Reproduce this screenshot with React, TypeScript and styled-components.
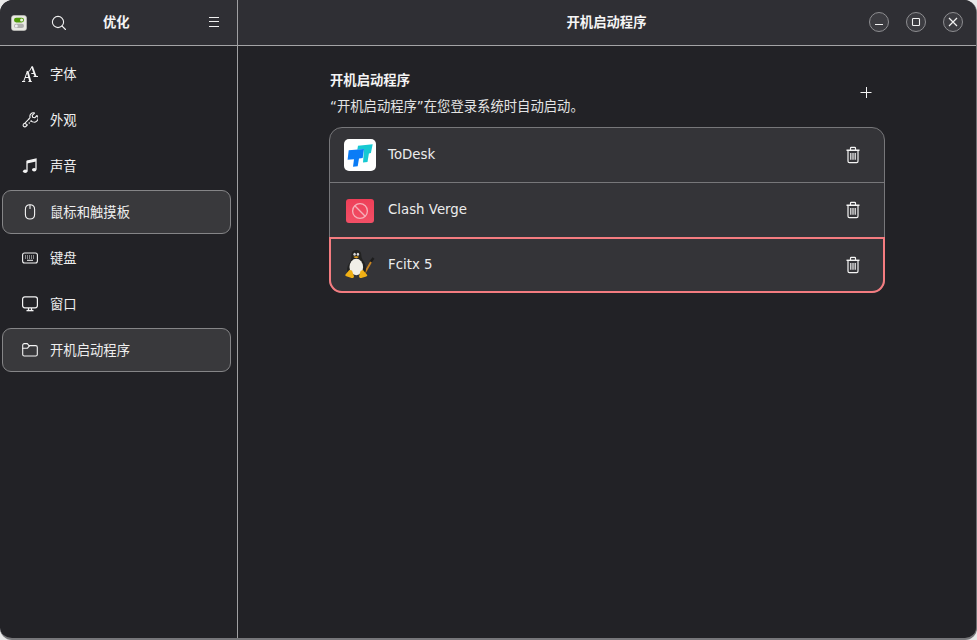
import React from 'react';
import styled, { createGlobalStyle } from 'styled-components';

const Global = createGlobalStyle`
  html, body { margin: 0; padding: 0; background: #e9e9e9; width: 977px; height: 640px; overflow: hidden; }
  #root { width: 977px; height: 640px; }
  * { box-sizing: border-box; }
`;

const Win = styled.div`
  width: 977px; height: 640px;
  display: grid;
  grid-template-columns: 238px 1fr;
  background: #222226;
  border-radius: 13px 13px 12px 12px;
  border-right: 1px solid #6f6f72;
  border-bottom: 2px solid #77777a;
  overflow: hidden;
  color: #f2f2f2;
  font-family: "DejaVu Sans", "Noto Sans CJK SC", sans-serif;
  font-size: 13.33px;
`;
const Side = styled.aside`
  display: flex; flex-direction: column;
  border-right: 1px solid #a0a0a2;
  min-height: 0;
`;
const Main = styled.main`
  display: flex; flex-direction: column; min-width: 0;
`;
const Header = styled.header`
  height: 46px; flex: none;
  background: #2f2f34;
  border-bottom: 1px solid #a4a4a6;
  display: flex; align-items: center;
  position: relative;
`;
const AppIconWrap = styled.span`
  display: flex; margin-left: 11px;
`;
const HeadIcon = styled.span<{ $ml: number }>`
  display: flex; margin-left: ${p => p.$ml}px; color: #f0f0f0;
`;
const SideTitle = styled.h1`
  margin: 0 0 0 36px; width: 27px; font-size: 13.33px; font-weight: 700; color: #f5f5f5; line-height: 1; white-space: nowrap;
`;
const MainTitle = styled.h1`
  margin: 0; flex: 1; text-align: center; font-size: 13.33px; font-weight: 700; line-height: 1; color: #f5f5f5;
  padding-right: 1px;
`;
const WinBtns = styled.div`
  position: absolute; right: 13px; top: 12px; display: flex; gap: 17px;
`;
const WinBtn = styled.span`
  width: 20px; height: 20px; border-radius: 50%;
  background: #3c3c41; border: 1px solid #8e8e91;
  display: flex; align-items: center; justify-content: center; color: #f2f2f2;
`;
const Nav = styled.nav`
  display: flex; flex-direction: column; gap: 2px;
  padding: 6px 6px 0 2px;
`;
const NavRow = styled.div<{ $on?: boolean }>`
  height: 44px; display: flex; align-items: center;
  border-radius: 9px;
  border: 1px solid ${p => (p.$on ? '#858587' : 'transparent')};
  background: ${p => (p.$on ? '#39393c' : 'transparent')};
  padding-left: 17px; gap: 10px;
  color: #efefef; line-height: 1;
`;
const NavLabel = styled.span`
  padding-top: 2px;
`;
const NavIcon = styled.span`
  width: 20px; height: 20px; display: flex; align-items: center; justify-content: center; flex: none; color: #f4f4f4;
`;
const Content = styled.div`
  flex: 1; padding: 26px 0 0 91px; width: 647px;
`;
const SecHead = styled.div`
  display: flex; align-items: flex-start; justify-content: space-between;
  height: 55px; width: 556px; padding: 0 11px 0 1px;
`;
const SecText = styled.div`
  display: flex; flex-direction: column; gap: 9px;
`;
const SecTitle = styled.h2`
  margin: 0; font-size: 13.33px; font-weight: 700; line-height: 17px; color: #f4f4f4;
`;
const SecSub = styled.p`
  margin: 0; font-size: 13.33px; font-weight: 400; line-height: 17px; color: #e4e4e4;
`;
const AddBtn = styled.span`
  display: flex; width: 16px; height: 16px; color: #f4f4f4; margin-top: 12px;
`;
const List = styled.div`
  width: 556px;
  border-radius: 13px;
  background: #343438;
  display: flex; flex-direction: column;
  position: relative;
  border: 1px solid #77777a;
`;
const Row = styled.div<{ $last?: boolean }>`
  height: ${p => (p.$last ? 54 : 55)}px; display: flex; align-items: center; padding: 0 23px 0 14px;
  border-bottom: ${p => (p.$last ? 'none' : '1px solid #77777a')};
  position: relative;
`;
const Focus = styled.div`
  position: absolute; left: -1px; right: -1px; bottom: -1px; height: 56px;
  border: 2px solid #f47c80; border-radius: 0 0 13px 13px; pointer-events: none;
`;
const AppIcon = styled.span`
  width: 32px; height: 32px; display: flex; flex: none; align-items: center; justify-content: center;
`;
const RowLabel = styled.span`
  margin-left: 12px; flex: 1; color: #ececec; line-height: 1; padding-bottom: 1px;
`;
const Trash = styled.span`
  display: flex; width: 16px; height: 18px; color: #f4f4f4;
`;

const Ico: React.FC<{ s?: number; children: React.ReactNode }> = ({ s = 16, children }) => (
  <svg width={s} height={s} viewBox="0 0 16 16" fill="none" stroke="currentColor" strokeWidth="1.1" strokeLinecap="round" strokeLinejoin="round">
    {children}
  </svg>
);

const TweaksIcon = () => (
  <svg width="16" height="16" viewBox="0 0 16 16">
    <rect x="0.5" y="0.5" width="15" height="15" rx="2.5" fill="#e9e9e3" stroke="#c9c9c4" strokeWidth="0.6" />
    <rect x="3" y="2.8" width="10" height="4.6" rx="2.3" fill="#4f9a08" />
    <circle cx="10.6" cy="5.1" r="1.5" fill="#e8f2dc" />
    <rect x="3" y="8.8" width="10" height="4.2" rx="2.1" fill="#b0b0ae" />
    <circle cx="5.3" cy="10.9" r="1.5" fill="#efefef" />
  </svg>
);

const FontIcon = () => (
  <svg width="16" height="16" viewBox="0 0 16 16" fill="none" stroke="currentColor" strokeLinejoin="round">
    <path d="M0 15.500h3.200M6.400 15.500h3.400" strokeWidth="1" />
    <path d="M1.600 15.500 5.500 5" strokeWidth="1" />
    <path d="M5.500 5 8.300 15.500" strokeWidth="1.900" />
    <path d="M3 11.500h4.500" strokeWidth="1" />
    <path d="M7.200 5.500 10 .5" strokeWidth="1" />
    <path d="M10 .5 13.700 10.800" strokeWidth="1.900" />
    <path d="M9.300 7.500h3" strokeWidth="1" />
    <path d="M11.500 10.500h4.500" strokeWidth="1" />
  </svg>
);

const WrenchIcon = () => (
  <Ico>
    <path d="M15 3.500 12.700 5.800l-2-.5-.5-2 2.300-2.300a3.500 3.500 0 0 0-4.400 4.500L7 6.800M9.200 8.800a3.500 3.500 0 0 0 5.800-5.300" />
    <path d="M6.800 7.200 2.700 11.300" />
    <path d="M5.200 13h.1M7.200 11h.1M9 9.200h.1" strokeWidth="1.400" />
    <circle cx="2.800" cy="13.200" r="1.700" />
  </Ico>
);

const NoteIcon = () => (
  <svg width="16" height="16" viewBox="0 0 16 16">
    <path d="M5 3.200 14 1v10.400" fill="none" stroke="currentColor" strokeWidth="1.300" />
    <path d="M5 2.800v10.200" stroke="currentColor" strokeWidth="1.300" />
    <path d="M5 3.200 14 1v2.400L5 5.600z" fill="currentColor" />
    <ellipse cx="3.200" cy="13.200" rx="2.200" ry="1.800" fill="currentColor" />
    <ellipse cx="12.200" cy="11.800" rx="2.200" ry="1.800" fill="currentColor" />
  </svg>
);

const MouseIcon = () => (
  <Ico>
    <path d="M8 .8C5.100.8 3.400 2.400 3.400 5.200v5.200c0 2.800 1.700 4.600 4.600 4.600s4.600-1.800 4.600-4.600V5.200C12.600 2.400 10.900.8 8 .8z" />
    <path d="M8 1.100v3.400" />
  </Ico>
);

const KeyboardIcon = () => (
  <svg width="16" height="16" viewBox="0 0 16 16" fill="none" stroke="currentColor" strokeWidth="1.100">
    <rect x="0.600" y="3" width="14.800" height="10" rx="2" />
    <path d="M3 6h10M3 8h10" strokeDasharray="1 1" strokeWidth="1" />
    <path d="M5 10.300h6" strokeWidth="1" />
  </svg>
);

const MonitorIcon = () => (
  <svg width="16" height="16" viewBox="0 0 16 16" fill="none" stroke="currentColor" strokeWidth="1.200">
    <rect x="0.600" y="0.800" width="14.800" height="11" rx="2.200" />
    <path d="M6.500 12v2M9.500 12v2" />
    <path d="M4.500 14.600h7" strokeWidth="1.400" />
  </svg>
);

const FolderIcon = () => (
  <Ico>
    <path d="M.7 3.200a1.600 1.600 0 0 1 1.600-1.600h3l1.700 2h6.700a1.600 1.600 0 0 1 1.600 1.600v7.200a1.600 1.600 0 0 1-1.600 1.600H2.300a1.600 1.600 0 0 1-1.600-1.600z" />
    <path d="M.7 6.200h4.800l2.200-2.600" />
  </Ico>
);

const TrashIcon = () => (
  <svg width="16" height="18" viewBox="0 0 16 18" fill="none" stroke="currentColor" strokeWidth="1.200">
    <path d="M1.500 4.300h13" strokeWidth="1.400" />
    <path d="M5.500 4V2.200c0-.5.400-.8.800-.8h3.400c.4 0 .8.300.8.800V4" />
    <path d="M3 4.500v10.700c0 .9.600 1.400 1.400 1.400h7.200c.8 0 1.400-.5 1.400-1.400V4.500" />
    <path d="M5.800 7v6.800M8 7v6.800M10.200 7v6.800" />
  </svg>
);

const ToDeskIcon = () => (
  <svg width="32" height="32" viewBox="0 0 32 32">
    <rect width="32" height="32" rx="5" fill="#ffffff" />
    <path d="M14 6.700 28.700 5.300 26.900 14 24.900 14.400 23.500 23 19 23.500 20 10 13.300 10.700z" fill="#17c9d2" />
    <path d="M4.700 11.300 20 10 18.700 19 15 19.400 13.700 27.300 9 27.800 10 20.300 3.600 20.800z" fill="#0a7cf6" />
  </svg>
);

const ClashIcon = () => (
  <svg width="28" height="26" viewBox="0 0 28 26">
    <defs>
      <linearGradient id="clashFill" x1="0" y1="0" x2="0" y2="1">
        <stop offset="0" stopColor="#ee3f58" />
        <stop offset="1" stopColor="#f24f66" />
      </linearGradient>
    </defs>
    <rect x="0" y="2" width="28" height="24" rx="3" fill="url(#clashFill)" />
    <circle cx="14" cy="14" r="7.400" fill="none" stroke="#f6b0ba" strokeWidth="1.300" />
    <path d="M8.800 8.800 19.200 19.200" stroke="#f6b0ba" strokeWidth="1.300" />
  </svg>
);

const TuxIcon = () => (
  <svg width="32" height="32" viewBox="0 0 32 32">
    <path d="M26.500 13 29.500 9" stroke="#1d1d1d" strokeWidth="2.400" fill="none" />
    <path d="M19 27 27 13" stroke="#c98420" strokeWidth="1.800" fill="none" />
    <path d="M12.300 1c3.300 0 5 2.200 5 5.200 0 3 1.800 5 3.200 7.500 1.600 3 1.900 7.200.7 10.300H3.700c-1.400-3.200-.4-7 1.800-10 1.600-2.300 1.900-4.500 1.900-7.300C7.400 3.200 9 1 12.300 1z" fill="#222" />
    <ellipse cx="12.300" cy="18" rx="6.800" ry="8.300" fill="#f1efe8" />
    <ellipse cx="10.600" cy="5.200" rx="1.200" ry="1.500" fill="#d8d8d8" />
    <ellipse cx="13.900" cy="5.200" rx="1.200" ry="1.500" fill="#d8d8d8" />
    <path d="M9.400 7.800c1.500-.9 4.100-.9 5.500 0-1 1.700-4.500 1.700-5.500 0z" fill="#e0a01c" />
    <path d="M5.300 21 1.500 25.600c-.5.800-.1 1.400.9 1.700l5.200 1.600c1.500.3 2.700-.6 2.300-2L8 21.500z" fill="#f0b015" />
    <path d="M19 21 23 25.800c.5.700.2 1.300-.7 1.600l-5 1.600c-1.400.2-2.500-.7-2.200-2l1.500-5.200z" fill="#f0b015" />
  </svg>
);

const nav = [
  { label: '字体', icon: <FontIcon /> },
  { label: '外观', icon: <WrenchIcon /> },
  { label: '声音', icon: <NoteIcon /> },
  { label: '鼠标和触摸板', icon: <MouseIcon />, on: true },
  { label: '键盘', icon: <KeyboardIcon /> },
  { label: '窗口', icon: <MonitorIcon /> },
  { label: '开机启动程序', icon: <FolderIcon />, on: true },
];

const apps = [
  { label: 'ToDesk', icon: <ToDeskIcon /> },
  { label: 'Clash Verge', icon: <ClashIcon /> },
  { label: 'Fcitx 5', icon: <TuxIcon />, last: true },
];

export default function App() {
  return (
    <>
      <Global />
      <Win>
        <Side>
          <Header>
            <AppIconWrap><TweaksIcon /></AppIconWrap>
            <HeadIcon $ml={24}>
              <Ico><circle cx="7" cy="7" r="5.600" /><path d="M11 11l3.500 3.500" /></Ico>
            </HeadIcon>
            <SideTitle>优化</SideTitle>
            <HeadIcon $ml={76}>
              <svg width="16" height="16" viewBox="0 0 16 16" stroke="currentColor" strokeWidth="1"><path d="M3 2.500h10M3 6.500h10M3 11.500h10" /></svg>
            </HeadIcon>
          </Header>
          <Nav>
            {nav.map(n => (
              <NavRow key={n.label} $on={n.on}>
                <NavIcon>{n.icon}</NavIcon>
                <NavLabel>{n.label}</NavLabel>
              </NavRow>
            ))}
          </Nav>
        </Side>
        <Main>
          <Header>
            <MainTitle>开机启动程序</MainTitle>
            <WinBtns>
              <WinBtn>
                <svg width="10" height="10" viewBox="0 0 10 10" stroke="currentColor" strokeWidth="1.100"><path d="M1 7.500h8" /></svg>
              </WinBtn>
              <WinBtn>
                <svg width="10" height="10" viewBox="0 0 10 10" fill="none" stroke="currentColor" strokeWidth="1.100"><rect x="1.500" y="1.500" width="7" height="7" rx="0.800" /></svg>
              </WinBtn>
              <WinBtn>
                <svg width="10" height="10" viewBox="0 0 10 10" stroke="currentColor" strokeWidth="1.200"><path d="M1 1l8 8M9 1l-8 8" /></svg>
              </WinBtn>
            </WinBtns>
          </Header>
          <Content>
            <SecHead>
              <SecText>
                <SecTitle>开机启动程序</SecTitle>
                <SecSub>“开机启动程序”在您登录系统时自动启动。</SecSub>
              </SecText>
              <AddBtn>
                <svg width="16" height="16" viewBox="0 0 16 16" stroke="currentColor" strokeWidth="1"><path d="M2.500 8.500h11M8.500 3v11" /></svg>
              </AddBtn>
            </SecHead>
            <List>
              {apps.map(a => (
                <Row key={a.label} $last={a.last}>
                  <AppIcon>{a.icon}</AppIcon>
                  <RowLabel>{a.label}</RowLabel>
                  <Trash><TrashIcon /></Trash>
                </Row>
              ))}
              <Focus />
            </List>
          </Content>
        </Main>
      </Win>
    </>
  );
}
